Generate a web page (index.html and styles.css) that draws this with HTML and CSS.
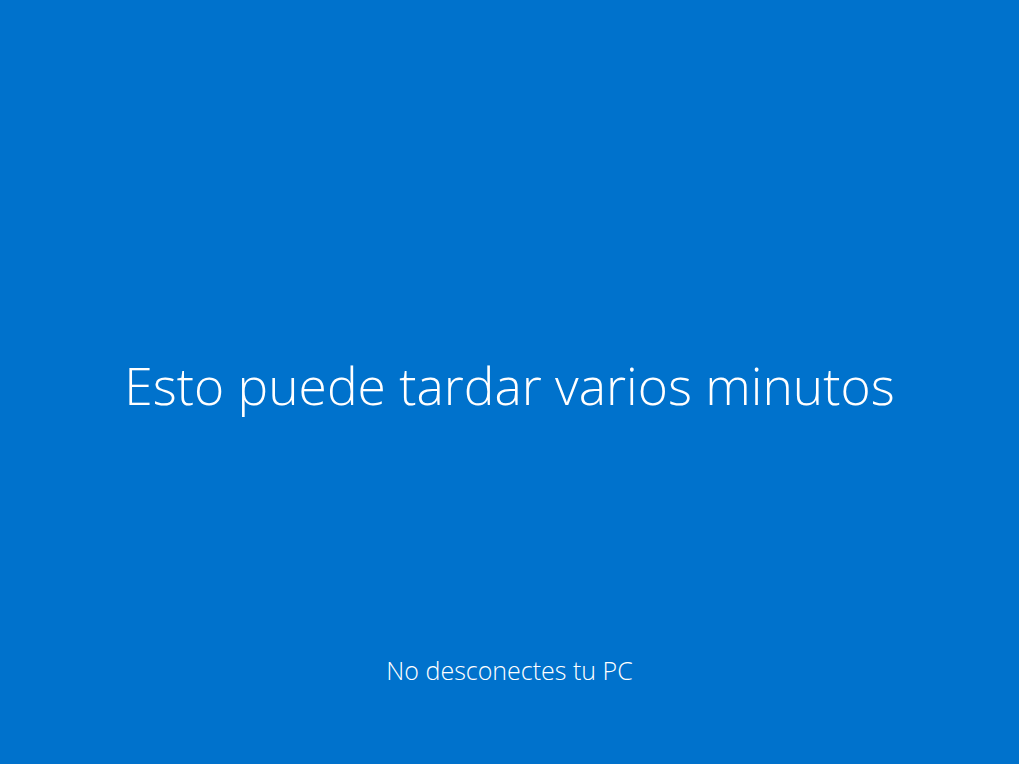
FILE: index.html
```html
<!DOCTYPE html>
<html lang="es">
<head>
    <meta charset="UTF-8">
    <title>Actualizando</title>
    <link rel="stylesheet" href="styles.css">
</head>
<body>

    <div class="screen">
        <div class="message">Esto puede tardar varios minutos</div>
        <div class="footer">No desconectes tu PC</div>
    </div>

</body>
</html>
```

FILE: styles.css
```css
html, body {
    margin: 0;
    height: 100%;
}

body {
    background-color: #0072cc;
    color: #fff;
    font-family: 'Open Sans', 'Segoe UI', sans-serif;
    font-weight: 300;
}

.screen {
    height: 100%;
    display: flex;
    flex-direction: column;
    align-items: center;
    box-sizing: border-box;
    padding: 349px 0 78px;
}

.message {
    font-size: 51.5px;
    line-height: 72px;
}

.footer {
    margin-top: auto;
    font-size: 25px;
    line-height: 32px;
}
```
